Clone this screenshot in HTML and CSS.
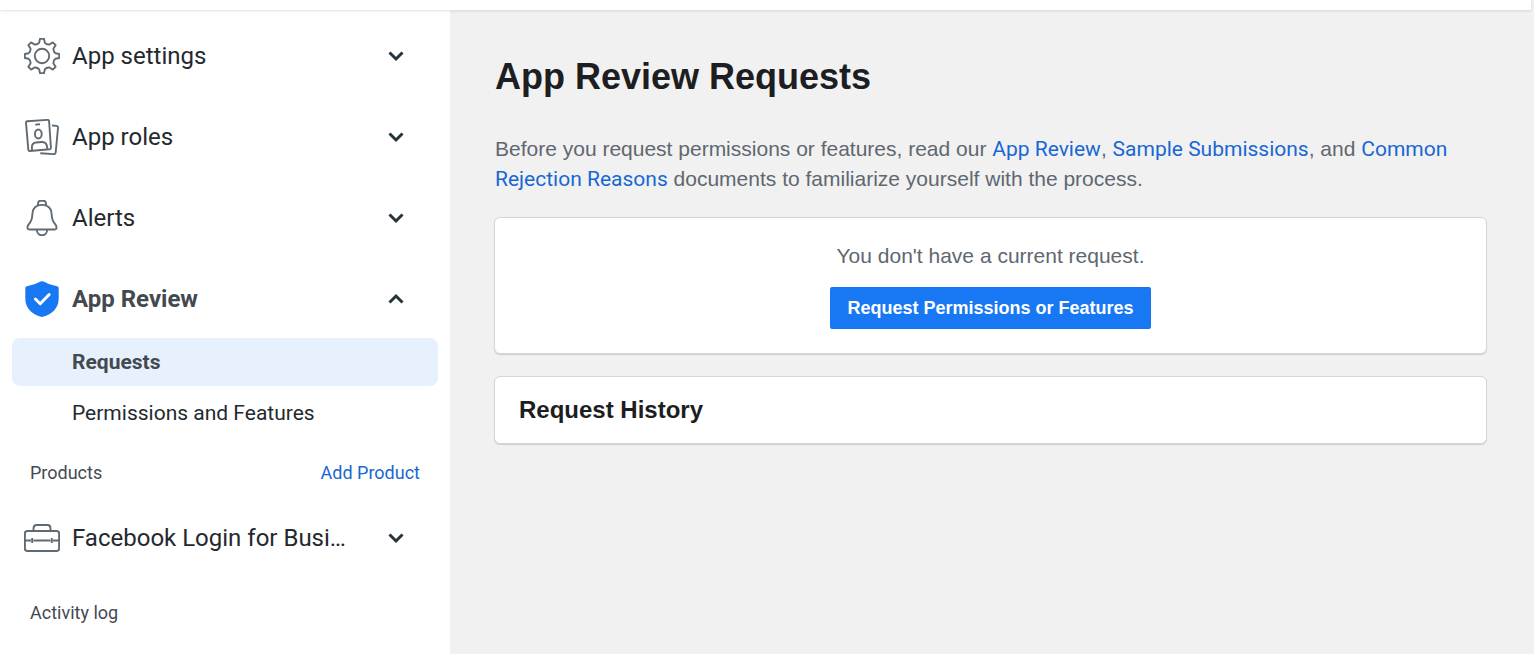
FILE: index.html
```html
<!DOCTYPE html>
<html lang="en">
<head>
<meta charset="utf-8">
<meta name="viewport" content="width=device-width, initial-scale=1">
<title>App Review Requests</title>
<link rel="stylesheet" href="styles.css">
</head>
<body>
<header class="topbar"></header>
<div class="layout">
  <nav class="sidebar" aria-label="App dashboard">
    <button class="nav-item" type="button" aria-expanded="false">
      <svg class="nav-icon" viewBox="-18 -18 36 36" aria-hidden="true">
        <path d="M-2-17.2H2L2.8-13.4Q4.6-11.1 7.5-11.5L10.8-13.6 13.6-10.8 11.5-7.5Q11.1-4.6 13.4-2.8L17.2-2V2L13.4 2.8Q11.1 4.6 11.5 7.5L13.6 10.8 10.8 13.6 7.5 11.5Q4.6 11.1 2.8 13.4L2 17.2H-2L-2.8 13.4Q-4.6 11.1-7.5 11.5L-10.8 13.6-13.6 10.8-11.5 7.5Q-11.1 4.6-13.4 2.8L-17.2 2V-2L-13.4-2.8Q-11.1-4.6-11.5-7.5L-13.6-10.8-10.8-13.6-7.5-11.5Q-4.6-11.1-2.8-13.4Z"/>
        <circle r="7.2"/>
      </svg>
      <span class="nav-label">App settings</span>
      <svg class="chevron" viewBox="0 0 18 18" aria-hidden="true"><path d="M2.5 5.5L9 12L15.5 5.5"/></svg>
    </button>
    <button class="nav-item" type="button" aria-expanded="false">
      <svg class="nav-icon" viewBox="0 0 36 36" aria-hidden="true">
        <path d="M3.3 2.2L23.6.9Q25 .8 25.1 2.2L26.9 28.5Q27 30 25.6 30.2L6 32Q4.5 32.1 4.3 30.6L2 3.7Q1.9 2.3 3.3 2.2Z"/>
        <path d="M28 6.5L32.5 6.9Q34.2 7.1 34 8.8L31.700 33.4Q31.5 35.2 29.7 35.1L16.3 34.2M11.2 5.6L16 5.2"/>
        <ellipse cx="14.3" cy="15" rx="3.4" ry="4.5"/>
        <path d="M8 31.5L7.9 27.5Q8.3 24 12 23.5L17.5 23Q21.5 22.8 22.7 26L23.5 30"/>
      </svg>
      <span class="nav-label">App roles</span>
      <svg class="chevron" viewBox="0 0 18 18" aria-hidden="true"><path d="M2.5 5.5L9 12L15.5 5.5"/></svg>
    </button>
    <button class="nav-item" type="button" aria-expanded="false">
      <svg class="nav-icon" viewBox="0 0 36 36" aria-hidden="true">
        <path d="M13.6 5.7L14.3 2.3Q14.7.8 16.2.8H19.8Q21.3.8 21.7 2.3L22.4 5.7M13.6 5.7Q18 4 22.4 5.7C26.5 7.5 27.6 11 27.7 15C27.8 20.5 29.5 22.5 32 25.3Q33.6 29.5 30.5 29.5H5.5Q2.4 29.5 4 25.3C6.5 22.5 8.2 20.5 8.3 15C8.4 11 9.5 7.5 13.6 5.7Z"/>
        <path d="M12.8 29.5C12.8 37.2 23.2 37.2 23.2 29.5"/>
      </svg>
      <span class="nav-label">Alerts</span>
      <svg class="chevron" viewBox="0 0 18 18" aria-hidden="true"><path d="M2.5 5.5L9 12L15.5 5.5"/></svg>
    </button>
    <button class="nav-item nav-item-open" type="button" aria-expanded="true">
      <svg class="nav-icon shield" viewBox="0 0 36 36" aria-hidden="true">
        <path class="shield-body" d="M16.5.6Q18-.2 19.5.6Q25 4 33 5.2Q34.7 5.5 34.7 7V17.5C34.7 28 27 33.5 19 35.8Q18 36.1 17 35.8C9 33.5 1.3 28 1.3 17.5V7Q1.3 5.5 3 5.2Q11 4 16.5.6Z"/>
        <path class="shield-check" d="M11.4 18L16.2 22.8L25.2 13.5"/>
      </svg>
      <span class="nav-label">App Review</span>
      <svg class="chevron" viewBox="0 0 18 18" aria-hidden="true"><path d="M2.5 12.5L9 6L15.5 12.5"/></svg>
    </button>
    <div class="subnav">
      <a class="subnav-item subnav-current" href="#requests" aria-current="page">Requests</a>
      <a class="subnav-item" href="#permissions">Permissions and Features</a>
    </div>
    <div class="section-row">
      <span>Products</span>
      <a class="link" href="#add-product">Add Product</a>
    </div>
    <button class="nav-item nav-product" type="button" aria-expanded="false">
      <svg class="nav-icon" viewBox="0 0 36 36" aria-hidden="true">
        <rect x=".9" y="11" width="34.2" height="20" rx="2.5"/>
        <path d="M9.5 11V8.5Q9.5 5 12.5 5H23.500Q26.5 5 26.5 8.5V11M1 20.5H7M9.5 20.5H26.5M29 20.5H35M8.2 18V23M27.8 18V23"/>
      </svg>
      <span class="nav-label">Facebook Login for Busi…</span>
      <svg class="chevron" viewBox="0 0 18 18" aria-hidden="true"><path d="M2.5 5.5L9 12L15.5 5.5"/></svg>
    </button>
    <a class="activity" href="#activity">Activity log</a>
  </nav>
  <main class="content">
    <h1 class="title">App Review Requests</h1>
    <p class="intro">Before you request permissions or features, read our <a class="link" href="#app-review">App Review</a>, <a class="link" href="#samples">Sample Submissions</a>, and <a class="link" href="#rejections">Common Rejection Reasons</a> documents to familiarize yourself with the process.</p>
    <section class="card request-card">
      <p class="request-text">You don't have a current request.</p>
      <button class="primary" type="button">Request Permissions or Features</button>
    </section>
    <section class="card history-card">
      <h2 class="history-title">Request History</h2>
    </section>
  </main>
</div>
</body>
</html>
```
FILE: styles.css
```css
* {
  box-sizing: border-box;
}

body {
  margin: 0;
  min-height: 100vh;
  display: flex;
  flex-direction: column;
  background: #f1f1f1;
  color: #1c1e21;
  font-family: "Liberation Sans", Arial, sans-serif;
}

.topbar {
  height: 10px;
  margin-right: 3px;
  background: #fff;
  box-shadow: 0 1px 3px rgba(0, 0, 0, 0.12);
  z-index: 1;
}

.layout {
  flex: 1;
  display: grid;
  grid-template-columns: 450px 1fr;
}

.sidebar {
  padding: 16px 12px;
  background: #fff;
  color: #23292e;
  font-family: Roboto, sans-serif;
}

.nav-item {
  display: flex;
  align-items: center;
  gap: 12px;
  width: 100%;
  height: 60px;
  margin-bottom: 21px;
  padding: 0 33px 0 12px;
  border: 0;
  background: none;
  color: inherit;
  font: 24px/30px Roboto, sans-serif;
  text-align: left;
}

.nav-item-open {
  margin-bottom: 9px;
  color: #444950;
  font-weight: 700;
}

.nav-label {
  flex: 1;
  min-width: 0;
  overflow: hidden;
  text-overflow: ellipsis;
  white-space: nowrap;
}

.nav-icon {
  flex: none;
  width: 36px;
  height: 36px;
  fill: none;
  stroke: #606a72;
  stroke-width: 1.9;
  stroke-linejoin: round;
}

.shield {
  stroke: none;
}

.shield-body {
  fill: #1877f2;
}

.shield-check {
  stroke: #fff;
  stroke-width: 3;
  stroke-linecap: round;
}

.chevron {
  flex: none;
  width: 18px;
  height: 18px;
  fill: none;
  stroke: #28343b;
  stroke-width: 3;
}

.subnav {
  display: grid;
  gap: 3px;
}

.subnav-item {
  padding: 9px 60px;
  border-radius: 8px;
  color: #23292e;
  font-size: 21px;
  line-height: 30px;
  text-decoration: none;
}

.subnav-current {
  background: #e7f0fd;
  color: #444950;
  font-weight: 700;
}

.section-row {
  display: flex;
  justify-content: space-between;
  padding: 24px 18px 23px;
  color: #444950;
  font-size: 18px;
  line-height: 24px;
}

.nav-product {
  margin-bottom: 33px;
}

.activity {
  display: block;
  padding: 0 18px;
  color: #444950;
  font-size: 18px;
  line-height: 24px;
  text-decoration: none;
}

.link {
  color: #1967d2;
  font-family: Roboto, sans-serif;
  text-decoration: none;
}

.content {
  padding: 43px 47px 42px 44px;
}

.title {
  margin: 0 0 33px;
  font-size: 36px;
  line-height: 48px;
}

.intro {
  margin: 0 0 23px;
  color: #606770;
  font-size: 21px;
  line-height: 30px;
}

.title,
.intro {
  padding-left: 1px;
}

.card {
  border: 1px solid #d3d6da;
  border-radius: 6px;
  background: #fff;
  box-shadow: 0 1px 1px rgba(0, 0, 0, 0.15);
}

.request-card {
  display: flex;
  flex-direction: column;
  align-items: center;
  gap: 16px;
  margin-bottom: 22px;
  padding: 23px 24px 24px;
}

.request-text {
  margin: 0;
  color: #606770;
  font-size: 21px;
  line-height: 30px;
}

.primary {
  padding: 6px 17px;
  border: 0;
  border-radius: 2px;
  background: #1877f2;
  color: #fff;
  font: 700 18px/30px "Liberation Sans", Arial, sans-serif;
}

.history-card {
  padding: 18px 24px;
}

.history-title {
  margin: 0;
  font-size: 24px;
  line-height: 30px;
}
```
